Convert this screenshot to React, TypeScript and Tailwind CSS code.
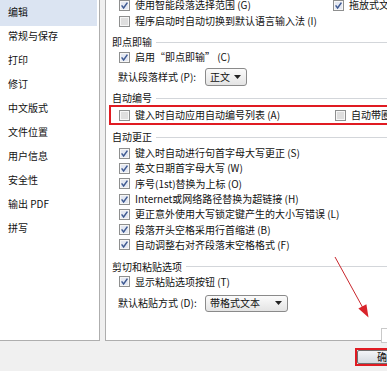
import React from 'react'

const font = { fontFamily: '"Noto Sans CJK SC", "Liberation Sans", sans-serif' }

function Box ({ on = false }: { on?: boolean }) {
  return (
    <svg width="11" height="11" viewBox="0 0 11 11" className="shrink-0">
      <rect x="0.5" y="0.5" width="10" height="10" fill="#f6f6f6" stroke="#8e8f8f" />
      <rect x="2" y="2" width="7" height="7" fill={on ? '#e4e8f2' : '#dedede'} />
      {on && <path d="M2.6 5.4 L4.6 7.9 L8.4 2.6" stroke="#3f5a92" strokeWidth="1.5" fill="none" />}
    </svg>
  )
}

function Check ({ on, label }: { on?: boolean, label: string }) {
  return (
    <div className="flex items-center whitespace-nowrap">
      <Box on={on} />
      <span className="ml-[5px]">{label}</span>
    </div>
  )
}

function Row ({ on, label, h = 'h-[16px]' }: { on?: boolean, label: string, h?: string }) {
  return (
    <div className={`${h} flex items-center pl-[13px]`}>
      <Check on={on} label={label} />
    </div>
  )
}

function Header ({ title, mt }: { title: string, mt: string }) {
  return (
    <div className={`${mt} h-[14px] flex items-center pl-[6px] pr-2`}>
      <span className="whitespace-nowrap">{title}</span>
      <div className="flex-1 h-px bg-[#d3d6da] ml-[4px]" />
    </div>
  )
}

function Select ({ value, w }: { value: string, w: string }) {
  return (
    <div className={`${w} flex items-center justify-between border border-[#8a8a8a] rounded-[3px] bg-gradient-to-b from-[#fbfbfb] to-[#e4e4e4] pl-[4px] pr-[5px]`}>
      <span>{value}</span>
      <svg width="7" height="4" viewBox="0 0 7 4"><path d="M0 0 H7 L3.5 4 Z" fill="#222" /></svg>
    </div>
  )
}

const sidebar = ['常规与保存', '打印', '修订', '中文版式', '文件位置', '用户信息', '安全性', '输出 PDF', '拼写']

const autoFix = [
  '键入时自动进行句首字母大写更正 (S)',
  '英文日期首字母大写 (W)',
  '序号(1st)替换为上标 (O)',
  'Internet或网络路径替换为超链接 (H)',
  '更正意外使用大写锁定键产生的大小写错误 (L)',
  '段落开头空格采用行首缩进 (B)',
  '自动调整右对齐段落末空格格式 (F)'
]

export default function App () {
  return (
    <div style={font} className="relative w-[387px] h-[371px] overflow-hidden bg-[#f0f0f0] text-[10px] text-[#111] leading-none">
      <div className="flex h-[341px]">
        <div className="w-[100px] shrink-0 bg-white border-r border-b border-[#aeaeae]">
          <div className="h-[26px] mr-[2px] pb-[2px] flex items-center pl-[8px] bg-[#dbe4f2]">编辑</div>
          {sidebar.map((item, i) => (
            <div key={item} className={`h-[24px] flex items-center pl-[8px] ${i === 0 ? '-mt-[2px]' : ''}`}>{item}</div>
          ))}
        </div>

        <div className="ml-[5px] w-[300px] shrink-0 bg-white border-l border-b border-[#aeaeae] overflow-hidden">
          <div className="-mt-[3px]">
            <div className="h-[16px] flex items-center pl-[13px]">
              <div className="w-[214px] shrink-0"><Check on label="使用智能段落选择范围 (G)" /></div>
              <Check on label="拖放式文字编辑 (D)" />
            </div>
            <Row label="程序启动时自动切换到默认语言输入法 (I)" />

            <Header title="即点即输" mt="mt-[6px]" />
            <Row on label="启用“即点即输” (C)" />
            <div className="mt-[3px] h-[18px] flex items-center pl-[12px]">
              <span className="w-[87px] whitespace-nowrap">默认段落样式 (P):</span>
              <Select value="正文" w="w-[42px] h-[18px]" />
            </div>

            <Header title="自动编号" mt="mt-[5px]" />
            <div className="ml-[3px] h-[20px] border-2 border-r-0 border-[#e01b22] flex items-center pl-[8px]">
              <div className="w-[216px] shrink-0"><Check label="键入时自动应用自动编号列表 (A)" /></div>
              <Check label="自动带圈字符 (U)" />
            </div>

            <Header title="自动更正" mt="mt-[5px]" />
            <div className="mt-[1.5px]">
              {autoFix.map(t => <Row key={t} on label={t} h="h-[15.3px]" />)}
            </div>

            <Header title="剪切和粘贴选项" mt="mt-[7px]" />
            <Row on label="显示粘贴选项按钮 (T)" />
            <div className="mt-[5px] h-[17px] flex items-center pl-[12px]">
              <span className="w-[87px] whitespace-nowrap">默认粘贴方式 (D):</span>
              <Select value="带格式文本" w="w-[83px] h-[17px]" />
            </div>
          </div>
        </div>
      </div>

      <div className="pl-[355px] pt-[7px]">
        <div className="w-[70px] border-2 border-[#e01b22]">
          <div className="h-[14px] w-[60px] flex items-center justify-center border border-[#707070] rounded-[2px] bg-gradient-to-b from-[#f3f5f8] to-[#d6dbe1]">确定</div>
        </div>
      </div>

      <div className="absolute left-[381px] top-[328px] w-[10px] h-[15px] bg-white border border-[#c9c9c9]" />

      <svg className="absolute left-0 top-0 pointer-events-none" width="387" height="371">
        <line x1="335" y1="257" x2="363" y2="308" stroke="#c9262c" strokeWidth="1" />
        <polygon points="368.5,317.5 358.4,308.5 366.4,304.3" fill="#d9232a" />
      </svg>
    </div>
  )
}
